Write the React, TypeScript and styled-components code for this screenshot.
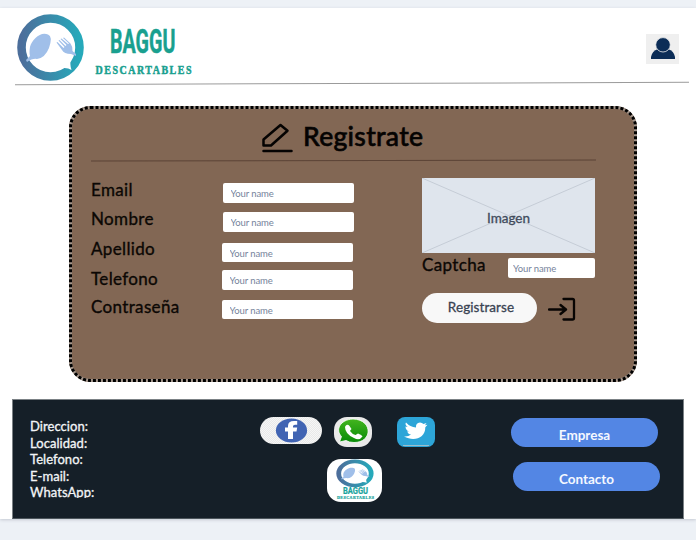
import React from "react";
import styled, { createGlobalStyle } from "styled-components";

const GlobalStyle = createGlobalStyle`
  *, *::before, *::after { box-sizing: border-box; }
  body { margin: 0; background: #edf1f6; font-family: Lato, "Liberation Sans", sans-serif; }
`;

const Page = styled.div`
  width: 696px;
  height: 540px;
  padding-top: 8px;
  overflow: hidden;
`;

const Sheet = styled.main`
  height: 511px;
  background: #fff;
  box-shadow: 0 1px 3px #c4c9d2;
`;

const Header = styled.header`
  height: 73px;
  display: flex;
  justify-content: space-between;
  padding: 4px 17px 0 14px;
`;

const UserBadge = styled.div`
  width: 33px;
  height: 30px;
  margin-top: 22px;
  background: #efefef;
`;

const HeaderRule = styled.div`
  width: 674px;
  height: 1.4px;
  margin: 2px 0 0 15px;
  background: #9b9b9b;
  transform: rotate(-0.2deg);
`;

const Card = styled.section`
  position: relative;
  width: 568px;
  height: 276px;
  margin: 22px 0 0 69px;
  padding: 16px 42px 0 22px;
  border-radius: 22px;
  background: #826754;
`;

const CardOutline = styled.svg`
  position: absolute;
  inset: 0;
  pointer-events: none;
`;

const CardTitle = styled.h1`
  display: flex;
  height: 37px;
  margin: 0;
  padding-left: 170px;
  gap: 10px;
  color: #050302;
  font-size: 26.5px;
  font-weight: 500;
  line-height: 29px;
  letter-spacing: 0.3px;
  -webkit-text-stroke: 0.6px #050302;
`;

const CardRule = styled.div`
  width: 505px;
  height: 1.3px;
  margin-top: 0.5px;
  background: #5b4336;
  transform: rotate(-0.1deg);
`;

const Columns = styled.div`
  display: flex;
  justify-content: space-between;
`;

const Fields = styled.div`
  padding-top: 18.5px;
`;

const Field = styled.label<{ $height: number }>`
  display: flex;
  align-items: flex-start;
  height: ${(p) => p.$height}px;
`;

const Label = styled.span<{ $width: number }>`
  width: ${(p) => p.$width}px;
  color: #0b0704;
  font-size: 17px;
  line-height: 20px;
  letter-spacing: 0.35px;
  -webkit-text-stroke: 0.35px #0b0704;
`;

const Input = styled.input<{ $width: number; $height: number; $top: number; $pad: number }>`
  width: ${(p) => p.$width}px;
  height: ${(p) => p.$height}px;
  margin: ${(p) => p.$top}px 0 0;
  padding: 2px 0 0 ${(p) => p.$pad}px;
  border: 0;
  border-radius: 2px;
  background: #fff;
  font: 9.5px Lato, sans-serif;
  letter-spacing: -0.1px;
  &::placeholder { color: #76839b; opacity: 1; }
`;

const Side = styled.div`
  width: 173px;
  padding-top: 16.5px;
`;

const Placeholder = styled.div`
  display: grid;
  height: 75px;
  > * { grid-area: 1 / 1; }
`;

const PlaceholderText = styled.span`
  place-self: center;
  padding-top: 5px;
  color: #414b5c;
  font-size: 13.5px;
  -webkit-text-stroke: 0.3px #414b5c;
`;

const CaptchaRow = styled.label`
  display: flex;
  height: 40px;
  padding-top: 2px;
`;

const Actions = styled.div`
  display: flex;
  align-items: flex-start;
  gap: 11px;
`;

const SubmitButton = styled.button`
  width: 115px;
  height: 30px;
  padding: 0 0 2px 3px;
  border: 0;
  border-radius: 15px;
  background: #f8f8f8;
  color: #3a4352;
  font: 13.5px Lato, sans-serif;
  letter-spacing: 0.08px;
  -webkit-text-stroke: 0.3px #3a4352;
`;

const EnterSlot = styled.div`
  padding-top: 4px;
`;

const Footer = styled.footer`
  display: grid;
  grid-template-columns: 247px 175px 1fr;
  width: 672px;
  height: 120px;
  margin: 17px 0 0 12px;
  border: 1px solid #7b8185;
  border-bottom-color: #4c555c;
  background: #151f28;
`;

const Contact = styled.address`
  height: 98px;
  padding: 18px 0 0 17px;
  overflow: hidden;
  color: #f3f5f7;
  font-size: 13px;
  font-style: normal;
  line-height: 16.4px;
  letter-spacing: 0.05px;
  -webkit-text-stroke: 0.3px #f3f5f7;
`;

const Social = styled.div`
  display: grid;
  grid-template-rows: 29px 44px;
  row-gap: 13px;
  padding-top: 17px;
`;

const SocialRow = styled.div`
  display: flex;
  align-items: flex-start;
  svg { flex: none; }
  svg:nth-child(2) { margin-left: 12px; }
  svg:nth-child(3) { margin-left: 25px; }
`;

const FooterBrand = styled.div`
  width: 55px;
  height: 43px;
  margin-left: 67px;
  border-radius: 14px;
  background: #fff;
`;

const Links = styled.nav`
  padding: 18px 0 0 76px;
`;

const LinkButton = styled.button<{ $shift?: number }>`
  display: block;
  width: 147px;
  height: 29px;
  margin: 0 0 15px ${(p) => p.$shift ?? 0}px;
  padding: 4px 0 0;
  border: 0;
  border-radius: 15px;
  background: #5386e4;
  color: #f5f8ff;
  font: bold 13.5px Lato, sans-serif;
`;

const BrandMark = ({ id }: { id: string }) => (
  <>
    <defs>
      <linearGradient id={id}>
        <stop offset="0" stopColor="#4c6e9b" />
        <stop offset="1" stopColor="#26a9ba" />
      </linearGradient>
    </defs>
    <circle cx="36.5" cy="35.5" r="29" fill="#fff" stroke={`url(#${id})`} strokeWidth="8.6" />
    <path d="M13 50 Q19 46 23 47 Q31 46 35 36 Q39 24 34 22.500 C27 19 18 27 16 35 Q15 41 16 44 L12 48Z" fill="#a0bfe9" />
    <path d="M62 44 L57 42 Q50 42 48 38 L42.500 30.500 L43.500 30 L49.500 36 L50.500 35 L44.500 28.500 L45.500 28 L51.500 34 L52.500 33 L46.500 27 L47.500 26.500 L54 32 L55 31.500 L49 26 L50 25.500 L56.500 31.500 Q59 35 58.500 39 L62 42Z" fill="#a0bfe9" />
    <path d="M46 55 L57 47 Q55.500 52 57.500 58 Q53 55 46 56.500Z" fill="#fff" />
  </>
);

const Logo = () => (
  <svg width="190" height="71" viewBox="0 0 190 71">
    <BrandMark id="ring" />
    <g fill="#19a08f" stroke="#19a08f">
      <text transform="translate(96 41) scale(.6 1)" fontFamily="Roboto, sans-serif" fontWeight="bold" fontSize="33.500" strokeWidth=".5" textLength="109" lengthAdjust="spacingAndGlyphs">BAGGU</text>
      <text transform="translate(81.500 61.700) scale(.8 1)" fontFamily="Liberation Serif, serif" fontWeight="bold" fontSize="12.500" strokeWidth=".5" textLength="120" lengthAdjust="spacing">DESCARTABLES</text>
    </g>
  </svg>
);

const UserIcon = () => (
  <svg width="33" height="30" viewBox="0 0 33 30">
    <path d="M5 25v-2q1-6 7-8h10q6 2 7 8v2Z" fill="#0c2d57" />
    <ellipse cx="17" cy="10.800" rx="7.300" ry="7.200" fill="#0c2d57" stroke="#efefef" strokeWidth=".8" />
  </svg>
);

const PencilIcon = () => (
  <svg width="32" height="32" viewBox="0 0 32 32" fill="none" stroke="#050302" strokeWidth="2.500" strokeLinejoin="round" strokeLinecap="round">
    <path d="M2.500 23.500v-6L19.500 3l7 5.800L10 23.500ZM2.500 29H30.500" />
  </svg>
);

const EnterIcon = () => (
  <svg width="28" height="24" viewBox="0 0 28 24" fill="none" stroke="#080503" strokeWidth="2.300" strokeLinecap="round" strokeLinejoin="round">
    <path d="M1 12.500H18M12.500 8l5.500 4.500-5.500 4.500M15.500 2H24.500Q26 2 26 3.500V21Q26 22.500 24.500 22.500H15.500" />
  </svg>
);

const CrossedImage = () => (
  <svg width="173" height="75" viewBox="0 0 173 75">
    <rect width="173" height="75" fill="#dfe5ed" />
    <path d="M0 0L173 75M173 0L0 75" stroke="#c5ccd6" />
  </svg>
);

const FacebookIcon = () => (
  <svg width="62" height="27" viewBox="0 0 62 27">
    <defs>
      <pattern id="checks" width="2" height="2" patternUnits="userSpaceOnUse">
        <rect width="2" height="2" fill="#f6f6f6" />
        <path d="M0 0h1v1H0zM1 1h1v1H1z" fill="#e9e9e9" />
      </pattern>
    </defs>
    <rect width="62" height="27" rx="13.500" fill="url(#checks)" />
    <ellipse cx="31.500" cy="13.500" rx="15.600" ry="12" fill="#4164b3" />
    <path d="M28 22V14.500H25V10.500h3V9q0-5 6-5h3.200v3.800H35q-2 0-2 1.500V10.500h4.200l-.7 4H33V22Z" fill="#fff" />
  </svg>
);

const WhatsAppIcon = () => (
  <svg width="38" height="30" viewBox="0 0 38 30">
    <defs>
      <linearGradient id="green" x2="0" y2="1">
        <stop stopColor="#43b51f" />
        <stop offset="1" stopColor="#088b08" />
      </linearGradient>
    </defs>
    <rect width="38" height="30" rx="13" fill="#e9e9e9" />
    <path d="M5.500 25L7.500 19.500C1 13 6 2.500 19 2C39 2.500 39 25.500 20 25.500Q15 25.500 12 23.500Z" fill="url(#green)" stroke="#fff" strokeWidth=".8" />
    <path d="M11.500 9Q13.500 6.500 15.500 9L17.500 12Q16.500 13 16 14Q18 17 21.500 18L24 16.500Q28 18 28.500 19.500Q25.500 24 20 21Q11 17 11 10Z" fill="#fff" />
  </svg>
);

const TwitterIcon = () => (
  <svg width="38" height="30" viewBox="0 0 38 30">
    <rect width="38" height="30" rx="8" fill="#2da5d8" />
    <path d="M6 28.500H32" stroke="#9bbdcb" />
    <path d="M7 19.500Q11 20 14 17.500Q11 17 10 14.500h2Q8.500 13 8.500 9.500l2.200.6Q7.500 7.500 9 5.500Q13 10 19 10.500Q18.500 6 23 5.500q2 0 3.500 1.500L29.500 6 28 8.300l2.500-.6L28.300 10.300C28.500 21 17 25 7 19.500Z" fill="#fff" />
  </svg>
);

const SmallLogo = () => (
  <svg width="55" height="43" viewBox="0 0 55 43">
    <g transform="translate(7.500 -.3) scale(.56 .415)"><BrandMark id="small-ring" /></g>
    <g fill="#18a39c" stroke="#18a39c" strokeWidth=".2" fontFamily="Roboto, sans-serif" fontWeight="bold">
      <text x="16" y="35" fontSize="8.500" textLength="25" lengthAdjust="spacingAndGlyphs">BAGGU</text>
      <text x="10" y="40.300" fontFamily="Liberation Serif, serif" fontSize="4" textLength="37">DESCARTABLES</text>
    </g>
  </svg>
);

const fields = [
  { label: "Email", row: 29, width: 132, top: 3, height: 20 },
  { label: "Nombre", row: 30, width: 132, top: 3, height: 20 },
  { label: "Apellido", row: 30, width: 131, top: 4, height: 19 },
  { label: "Telefono", row: 28, width: 131, top: 1, height: 20 },
  { label: "Contraseña", row: 30, width: 131, top: 3, height: 19 },
];

export default function App() {
  return (
    <>
      <GlobalStyle />
      <Page>
        <Sheet>
          <Header>
            <Logo />
            <UserBadge><UserIcon /></UserBadge>
          </Header>
          <HeaderRule />
          <Card>
            <CardOutline width="568" height="276" fill="none" strokeWidth="3">
              <rect x="1.500" y="1.500" width="565" height="273" rx="20" stroke="#a3958b" />
              <rect x="1.500" y="1.500" width="565" height="273" rx="20" stroke="#000" strokeDasharray="3 2" />
            </CardOutline>
            <CardTitle><PencilIcon />Registrate</CardTitle>
            <CardRule />
            <Columns>
              <Fields>
                {fields.map((f) => (
                  <Field key={f.label} $height={f.row}>
                    <Label $width={f.width}>{f.label}</Label>
                    <Input placeholder="Your name" $width={131} $height={f.height} $top={f.top} $pad={7.5} />
                  </Field>
                ))}
              </Fields>
              <Side>
                <Placeholder>
                  <CrossedImage />
                  <PlaceholderText>Imagen</PlaceholderText>
                </Placeholder>
                <CaptchaRow>
                  <Label $width={86}>Captcha</Label>
                  <Input placeholder="Your name" $width={87} $height={20} $top={3} $pad={5} />
                </CaptchaRow>
                <Actions>
                  <SubmitButton>Registrarse</SubmitButton>
                  <EnterSlot><EnterIcon /></EnterSlot>
                </Actions>
              </Side>
            </Columns>
          </Card>
          <Footer>
            <Contact>
              Direccion:<br />Localidad:<br />Telefono:<br />E-mail:<br />WhatsApp:
            </Contact>
            <Social>
              <SocialRow><FacebookIcon /><WhatsAppIcon /><TwitterIcon /></SocialRow>
              <FooterBrand><SmallLogo /></FooterBrand>
            </Social>
            <Links>
              <LinkButton>Empresa</LinkButton>
              <LinkButton $shift={2}>Contacto</LinkButton>
            </Links>
          </Footer>
        </Sheet>
      </Page>
    </>
  );
}
